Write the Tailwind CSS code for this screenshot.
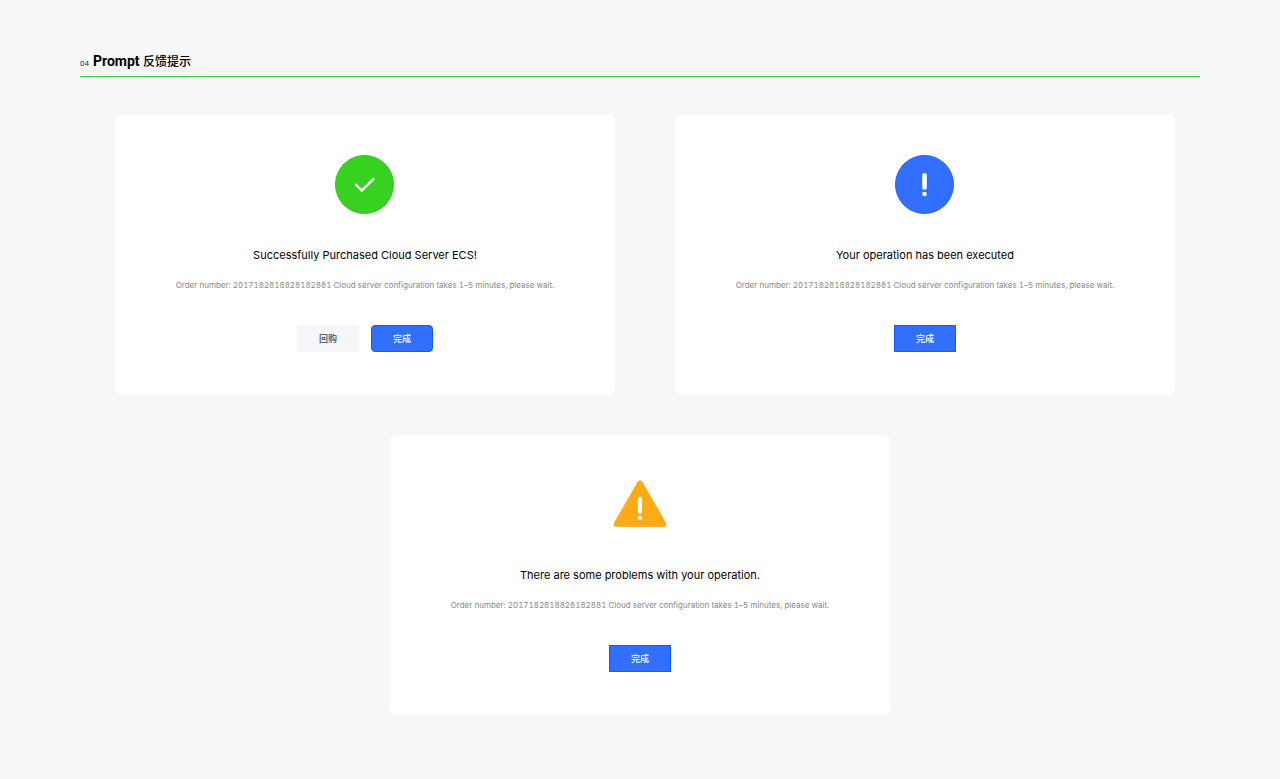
<!DOCTYPE html>
<html lang="en">
<head>
<meta charset="utf-8">
<meta name="viewport" content="width=device-width, initial-scale=1">
<title>Prompt 反馈提示</title>
<script src="https://cdn.jsdelivr.net/npm/@tailwindcss/browser@4"></script>
</head>
<body class="min-h-screen bg-[#f7f7f7] pb-16 font-['Inter','Noto_Sans_CJK_SC',sans-serif] text-black">
<header class="px-20 pt-[52px]">
  <div class="flex items-baseline gap-1 pb-1">
    <span class="font-['Roboto',sans-serif] text-[8px] leading-4 text-[#333333]">04</span>
    <h1 class="font-['Roboto','Noto_Sans_CJK_SC',sans-serif] text-sm leading-[18px] font-bold">Prompt <span lang="zh" class="text-xs leading-4 font-medium">反馈提示</span></h1>
  </div>
  <div class="h-px bg-[#3fd038]"></div>
</header>
<main class="pt-[38px]">
  <div class="grid grid-cols-2 gap-[60px] pr-[105px] pl-[115px]">
    <section class="flex flex-col items-center rounded-md bg-white px-4 pt-10 pb-[43px]">
      <svg class="h-[59px] w-15" viewBox="0 0 60 59" fill="none" aria-hidden="true"><circle cx="29.5" cy="29.5" r="29" fill="#38d122" stroke="#27ca14"/><path d="M20.3 29.2l6.5 6.3 12.3-12.2" stroke="#fff" stroke-width="2.4"/></svg>
      <h2 class="mt-[33px] text-[11px] leading-4">Successfully Purchased Cloud Server ECS!</h2>
      <p class="mt-4 text-[8px] leading-3 text-[#888888] tabular-nums">Order number: 2017182818828182881 Cloud server configuration takes 1–5 minutes, please wait.</p>
      <div class="mt-[34px] flex gap-3">
        <button type="button" lang="zh" class="h-[27px] w-[62px] rounded bg-[#f5f6fa] text-[9px] font-medium text-[#414755]">回购</button>
        <button type="button" lang="zh" class="h-[27px] w-[62px] rounded border border-[#1459fb] bg-[#326fff] text-[9px] font-medium text-white">完成</button>
      </div>
    </section>
    <section class="flex flex-col items-center rounded-md bg-white px-4 pt-10 pb-[43px]">
      <svg class="h-[59px] w-15" viewBox="0 0 60 59" fill="none" aria-hidden="true"><circle cx="29.5" cy="29.5" r="29" fill="#326fff" stroke="#1d60fa"/><rect x="27.2" y="18" width="4.6" height="16.8" rx="2.1" fill="#fff"/><circle cx="29.5" cy="39" r="2.3" fill="#fff"/></svg>
      <h2 class="mt-[33px] text-[11px] leading-4">Your operation has been executed</h2>
      <p class="mt-4 text-[8px] leading-3 text-[#888888] tabular-nums">Order number: 2017182818828182881 Cloud server configuration takes 1–5 minutes, please wait.</p>
      <button type="button" lang="zh" class="mt-[34px] h-[27px] w-[62px] border border-[#1459fb] bg-[#326fff] text-[9px] font-medium text-white">完成</button>
    </section>
  </div>
  <section class="mx-auto mt-10 flex w-full max-w-[500px] flex-col items-center rounded-md bg-white px-4 pt-10 pb-[43px]">
    <svg class="h-[59px] w-15" viewBox="0 0 60 59" fill="none" aria-hidden="true"><path d="M27.7 7.3Q30 4 32.3 7.3L55.7 48Q57 51.5 53.5 51.5H6.5Q3 51.5 4.3 48Z" fill="#fbab15" stroke="#f8a50b" stroke-width=".7"/><rect x="27.9" y="22" width="4.2" height="16.8" rx="2" fill="#fff"/><circle cx="30" cy="43" r="2.3" fill="#fff"/></svg>
    <h2 class="mt-[33px] text-[11px] leading-4">There are some problems with your operation.</h2>
    <p class="mt-4 text-[8px] leading-3 text-[#888888] tabular-nums">Order number: 2017182818828182881 Cloud server configuration takes 1–5 minutes, please wait.</p>
    <button type="button" lang="zh" class="mt-[34px] h-[27px] w-[62px] border border-[#1459fb] bg-[#326fff] text-[9px] font-medium text-white">完成</button>
  </section>
</main>
</body>
</html>
